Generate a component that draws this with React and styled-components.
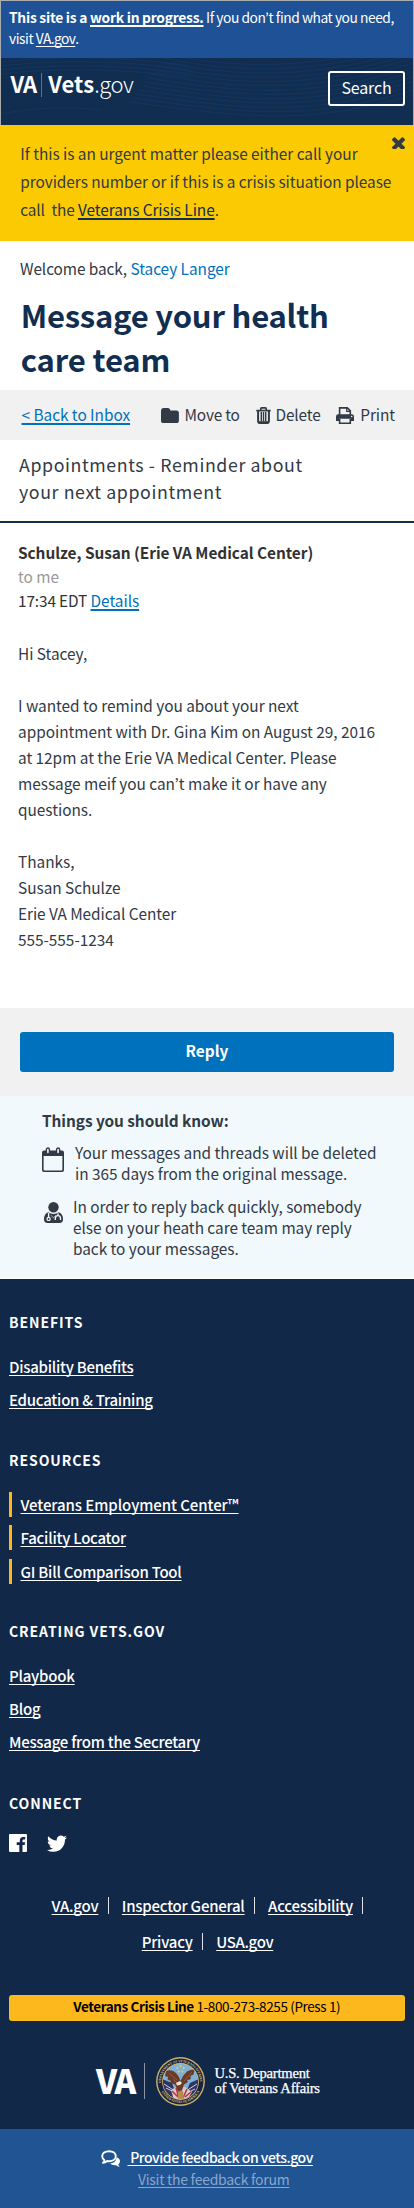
import React from 'react';
import styled, { createGlobalStyle } from 'styled-components';

const GlobalStyle = createGlobalStyle`
  * { box-sizing: border-box; }
  body {
    margin: 0;
    background: #fff;
    color: #323a45;
    font-family: "Noto Sans CJK KR", "Open Sans", sans-serif;
    font-size: 15.4px;
    letter-spacing: -0.03px;
  }
  p, h1, h2, h3, ul { margin: 0; padding: 0; font-weight: 400; list-style: none; }
`;

const Page = styled.div`
  width: 414px;
  height: 2208px;
  overflow: hidden;
  display: flex;
  flex-direction: column;
`;

const Line = styled.span`
  display: block;
  white-space: pre;
  letter-spacing: ${p => p.$ls ?? -0.03}px;
`;

const Run = styled.span`
  white-space: pre;
  letter-spacing: ${p => p.$ls ?? 0}px;
  font-weight: ${p => p.$weight ?? 'inherit'};
`;

const Link = styled.a`
  color: ${p => p.$color ?? '#0071bc'};
  letter-spacing: ${p => p.$ls ?? -0.03}px;
  font-weight: ${p => p.$weight ?? 'inherit'};
  white-space: pre;
  text-decoration: ${p => (p.$plain ? 'none' : 'underline')};
  text-decoration-thickness: ${p => p.$thick ?? 1}px;
  text-underline-offset: ${p => p.$offset ?? 2}px;
  text-decoration-skip-ink: none;
`;

/* ---------- top of the page ---------- */
const Top = styled.div`
  height: 125px;
  border: 1px solid #a9adae;
  border-bottom: 0;
`;

const Banner = styled.div`
  height: 57px;
  padding: 6px 0 0 8px;
  background: #1e5196;
  color: #fff;
  font-size: 13.8px;
  line-height: 21.3px;
`;

const Header = styled.header`
  position: relative;
  height: 67px;
  padding: 13px 8px 0 9.5px;
  display: flex;
  justify-content: space-between;
  align-items: flex-start;
  background: #112e51;
  color: #fff;
`;

const Waves = styled.svg`
  position: absolute;
  inset: 0;
  width: 100%;
  height: 100%;
`;

const Brand = styled.div`
  position: relative;
  display: flex;
  align-items: center;
  height: 24px;
  font-size: 22px;
  line-height: 24px;
`;

const BrandRule = styled.span`
  width: 1px;
  height: 24px;
  margin: 3px 6px 0 5px;
  background: #5b7089;
`;

const SearchButton = styled.button`
  position: relative;
  width: 77px;
  height: 35px;
  padding: 0 0 2px;
  border: 2px solid #fff;
  border-radius: 3px;
  background: transparent;
  color: #fff;
  font: 400 16px/29px "Noto Sans CJK KR", sans-serif;
  letter-spacing: -0.15px;
`;

const Alert = styled.section`
  height: 116px;
  padding: 14.4px 9px 0 20.3px;
  display: flex;
  justify-content: space-between;
  background: #fbca03;
  line-height: 28px;
  white-space: nowrap;
`;

const CloseIcon = styled.svg`
  width: 13px;
  height: 13px;
  margin: -3.4px 0 0 -40px;
  flex: none;
`;

/* ---------- message ---------- */
const Intro = styled.section`
  height: 149px;
  padding: 15px 20px 0;
  line-height: 24px;
`;

const Title = styled.h1`
  margin: 12.8px 0 0 0.7px;
  color: #112e51;
  font-size: 31px;
  font-weight: 700;
  line-height: 43.7px;
`;

const Toolbar = styled.nav`
  height: 50px;
  padding: 0 19px 2px 21.5px;
  display: flex;
  align-items: center;
  justify-content: space-between;
  background: #f1f1f1;
`;

const Actions = styled.div`
  display: flex;
  align-items: center;
  gap: ${p => p.$gap}px;
`;

const Action = styled.span`
  display: flex;
  align-items: center;
  line-height: 24px;

  svg { display: block; margin-right: ${p => p.$gap}px; position: relative; top: 1px; }
`;

const Subject = styled.h2`
  height: 83px;
  padding: 11.4px 19px 0;
  border-bottom: 2px solid #112e51;
  font-size: 17.8px;
  line-height: 27px;
`;

const Message = styled.article`
  height: 485px;
  padding: 16.5px 18px 0;
  line-height: 24px;
`;

const Sender = styled.div`
  color: #323232;
`;

const Muted = styled.p`
  color: #999;
`;

const Body = styled.div`
  margin-top: 28px;
  display: flex;
  flex-direction: column;
  gap: 26px;
  line-height: 26px;
`;

const ReplyBar = styled.div`
  height: 88px;
  padding: 24px 20px;
  background: #f1f1f1;
`;

const ReplyButton = styled.button`
  display: block;
  width: 374px;
  height: 40px;
  padding: 0 0 2.5px;
  border: 0;
  border-radius: 3px;
  background: #0071bc;
  color: #fff;
  font: 700 15.4px/37px "Noto Sans CJK KR", sans-serif;
`;

const Info = styled.aside`
  height: 183px;
  padding: 12.2px 20px 0 42px;
  border-bottom: 1px solid #fff;
  background: #f1f9fd;
  line-height: 24px;
`;

const InfoItem = styled.div`
  display: flex;
  align-items: flex-start;
  margin-top: ${p => p.$top}px;
  line-height: 21px;

  svg { flex: none; margin: ${p => p.$icon}; }
`;

/* ---------- footer ---------- */
const Footer = styled.footer`
  height: 850px;
  padding: 31.2px 9px 0;
  background: #112849;
  color: #fff;
`;

const FooterHeading = styled.h3`
  margin-top: ${p => p.$top ?? 0}px;
  font-size: 14px;
  font-weight: 700;
  line-height: 24px;
  letter-spacing: 0.92px;
`;

const FooterList = styled.ul`
  margin-top: 19.7px;
  display: flex;
  flex-direction: column;
  gap: 8.3px;
  font-size: 15px;
  line-height: 25px;
`;

const FooterItem = styled.li`
  height: 25px;
  ${p => p.$marked && 'border-left: 3.5px solid #fdb81e; padding-left: 9px; margin-left: -0.5px;'}
`;

const Social = styled.div`
  margin-top: 19px;
  display: flex;
  align-items: center;
  gap: 20px;
  height: 19px;

  svg { display: block; }
`;

const LegalLinks = styled.div`
  margin: 34.9px 0 0;
  padding-left: 1px;
  display: flex;
  flex-direction: column;
  font-size: 15px;
  line-height: 36.2px;
`;

const LegalRow = styled.div`
  display: flex;
  justify-content: center;
  align-items: center;
`;

const Divider = styled.i`
  width: 1px;
  height: 17px;
  margin: 0 ${p => p.$after ?? 13}px 0 9.5px;
  background: #dfe3e8;
`;

const CrisisLine = styled.div`
  height: 26px;
  margin: 34.6px 0 0 -0.5px;
  border-radius: 3px;
  background: #fdb81e;
  color: #000;
  font-size: 13.5px;
  line-height: 23px;
  text-align: center;
  white-space: pre;
`;

const Department = styled.div`
  margin-top: 36px;
  height: 49px;
  padding-left: 87px;
  display: flex;
  align-items: center;
`;

const VaMark = styled.span`
  width: 48px;
  margin-top: -2px;
  font-size: 33px;
  font-weight: 900;
  line-height: 48px;
  letter-spacing: -2px;
`;

const MarkRule = styled.i`
  width: 1px;
  height: 36px;
  margin-right: 11px;
  background: #8995a6;
`;

const DepartmentName = styled.div`
  margin: -1px 0 0 9.5px;
  font-family: "Liberation Serif", serif;
  font-size: 14.6px;
  line-height: 14.2px;
  -webkit-text-stroke: 0.25px #fff;
`;

const Feedback = styled.section`
  height: 79px;
  padding-top: 16.5px;
  background: #205493;
  color: #fff;
  font-size: 14px;
  line-height: 22px;
`;

const FeedbackRow = styled.div`
  display: flex;
  padding-left: ${p => p.$left}px;

  svg { flex: none; margin: 4.5px 8px 0 0; }
`;

/* ---------- drawings ---------- */
const HeaderWaves = () => (
  <Waves viewBox="0 0 412 67" preserveAspectRatio="none" fill="none" stroke="#15447a" strokeOpacity="0.42" strokeWidth="0.8">
    {Array.from({ length: 13 }, (_, i) => (
      <path key={i} d={`M${165 - i * 3} ${i * 4 - 4} C ${230 + i * 3} ${10 + i * 4.4}, ${310} ${14 + i * 4.2}, 412 ${-18 + i * 4.6}`} />
    ))}
    {Array.from({ length: 4 }, (_, i) => (
      <path key={`l${i}`} d={`M0 ${4 + i * 4} C 60 ${i * 4 - 3}, 130 ${i * 4 - 1}, 190 ${8 + i * 4}`} />
    ))}
    <path d="M0 56C30 50 60 48 100 52" />
  </Waves>
);

const FolderIcon = () => (
  <svg width="18" height="15" viewBox="0 0 18 15" fill="#323a45">
    <path d="M2.8 0h3.9a2.5 2.5 0 0 1 2.5 2.5h6.1a2.6 2.6 0 0 1 2.6 2.6v7.3a2.6 2.6 0 0 1-2.6 2.6H2.6A2.6 2.6 0 0 1 0 12.400V2.700A2.700 2.700 0 0 1 2.800 0z" />
  </svg>
);

const TrashIcon = () => (
  <svg width="15" height="17" viewBox="0 0 15 17" fill="none" stroke="#323a45">
    <path d="M4.700 3V1.900q0-1 1-1h3.600q1 0 1 1V3" strokeWidth="1.600" />
    <path d="M0.300 3.600h14.400" strokeWidth="1.700" />
    <path d="M2.100 4v10.300q0 1.800 1.800 1.800h7.200q1.800 0 1.800-1.800V4" strokeWidth="2" />
    <path d="M5.300 5v9.500M7.500 5v9.500M9.700 5v9.500" strokeWidth="1.400" />
    <path d="M3 14.900h9" strokeWidth="1.400" />
  </svg>
);

const PrintIcon = () => (
  <svg width="18" height="17" viewBox="0 0 18 17">
    <path d="M3.600 8V.9h7.700l3 3V8" fill="none" stroke="#323a45" strokeWidth="1.600" />
    <path d="M10.700.8v3.600h3.700" fill="none" stroke="#323a45" strokeWidth="1.200" />
    <path d="M2.300 7.200h13.400A2.300 2.300 0 0 1 18 9.500V14h-3v-2.200H3V14H0V9.500a2.300 2.300 0 0 1 2.300-2.300z" fill="#323a45" />
    <path d="M3.600 11.700v4.500h10.700v-4.500" fill="none" stroke="#323a45" strokeWidth="1.600" />
    <circle cx="15.700" cy="9.500" r=".8" fill="#f1f1f1" />
  </svg>
);

const CalendarIcon = () => (
  <svg width="22" height="25" viewBox="0 0 22 25">
    <path d="M2 3.500h18a2 2 0 0 1 2 2V23a2 2 0 0 1-2 2H2a2 2 0 0 1-2-2V5.500a2 2 0 0 1 2-2zM1.600 9v13.600q0 .8.800.8h17.200q.8 0 .8-.8V9z" fill="#323a45" fillRule="evenodd" />
    <rect x="4.400" y="1" width="3" height="6" rx="1.500" fill="#f1f9fd" stroke="#323a45" strokeWidth="1.400" />
    <rect x="14.600" y="1" width="3" height="6" rx="1.500" fill="#f1f9fd" stroke="#323a45" strokeWidth="1.400" />
  </svg>
);

const DoctorIcon = () => (
  <svg width="19" height="21" viewBox="0 0 19 21">
    <circle cx="9.500" cy="5.300" r="5.200" fill="#323a45" />
    <path d="M4.200 10.300Q0 11.500 0 17.600 0 21 3.500 21h12q3.500 0 3.500-3.400 0-6.100-4.200-7.300Q12.500 12 9.500 12t-5.300-1.700z" fill="#323a45" />
    <path d="M4.600 11v4.500M14 11.200v2.300M11.300 18v-1.600q0-2.700 2.600-2.700t2.600 2.700V18" fill="none" stroke="#f1f9fd" strokeWidth="1.300" />
    <circle cx="4.600" cy="16.900" r="1.600" fill="#323a45" stroke="#f1f9fd" strokeWidth="1.200" />
    <path d="M6.800 13.200l2.700 2.600 2.300-2.500" fill="none" stroke="#f1f9fd" strokeWidth=".6" />
  </svg>
);

const FacebookIcon = () => (
  <svg width="18" height="18" viewBox="0 0 18 18" fill="#fff">
    <path d="M1 0h16a1 1 0 0 1 1 1v16a1 1 0 0 1-1 1h-3.500v-7h2.200l.4-2.700h-2.600V6.600q0-1.200 1.300-1.200h1.400V3q-.7-.1-2-.1-3.400 0-3.400 3.500v1.900H7.700V11h2.600v7H1a1 1 0 0 1-1-1V1a1 1 0 0 1 1-1z" />
  </svg>
);

const TwitterIcon = () => (
  <svg width="20" height="17" viewBox="0 1.800 24 20" fill="#fff">
    <path d="M23.950 4.570a10 10 0 0 1-2.820.77 4.960 4.960 0 0 0 2.160-2.720c-.95.550-2 .95-3.130 1.180a4.920 4.920 0 0 0-8.380 4.480C7.690 8.100 4.070 6.130 1.640 3.160a4.820 4.820 0 0 0-.67 2.480c0 1.710.87 3.210 2.190 4.100a4.900 4.900 0 0 1-2.230-.62v.06a4.920 4.920 0 0 0 3.950 4.830 5 5 0 0 1-2.210.08 4.940 4.940 0 0 0 4.600 3.420A9.870 9.870 0 0 1 0 19.540a14 14 0 0 0 7.550 2.210c9.050 0 14-7.500 14-13.980 0-.21 0-.42-.02-.63a9.940 9.940 0 0 0 2.460-2.550z" />
  </svg>
);

const CommentsIcon = () => (
  <svg width="19" height="17" viewBox="0 0 19 17">
    <path d="M8 1.200c4 0 6.800 2 6.800 5s-2.800 5-6.800 5q-1 0-1.900-.2Q4.200 12.600 2 12.800q1.200-1.100 1.400-2.800Q1.200 8.700 1.200 6.200c0-3 2.800-5 6.800-5z" fill="none" stroke="#fff" strokeWidth="1.900" strokeLinejoin="round" />
    <path d="M15.700 7.200Q19 8.500 19 11.200q0 1.900-1.700 3.200.3 1.200 1.500 2.300-2 0-3.600-1.500-3.900.5-6.200-1.700 6-.6 6.700-6.300z" fill="#fff" />
  </svg>
);

const Seal = () => (
  <svg width="49" height="49" viewBox="0 0 49 49">
    <defs>
      <path id="seal-top" d="M5.300 27.500A19.400 19.400 0 1 1 43.700 27.500" />
      <path id="seal-bottom" d="M3.800 30A21.400 21.400 0 0 0 45.200 30" />
      <clipPath id="seal-field"><circle cx="24.500" cy="24.500" r="17.600" /></clipPath>
    </defs>
    <circle cx="24.500" cy="24.500" r="24.400" fill="#c9b268" />
    <circle cx="24.500" cy="24.500" r="23" fill="#1c2340" />
    <circle cx="24.500" cy="24.500" r="18.400" fill="#d3bd74" />
    <circle cx="24.500" cy="24.500" r="17.600" fill="#7fb0d6" />
    <g fill="#dccb84" fontFamily="Liberation Serif, serif" fontWeight="700" fontSize="3.500" letterSpacing="0">
      <text><textPath href="#seal-top" startOffset="2" textLength="61" lengthAdjust="spacingAndGlyphs">DEPARTMENT OF VETERANS AFFAIRS</textPath></text>
      <text><textPath href="#seal-bottom" startOffset="5" textLength="46" lengthAdjust="spacingAndGlyphs">UNITED STATES OF AMERICA</textPath></text>
    </g>
    <g clipPath="url(#seal-field)">
      <path d="M6 22l10 4 5 14-7 3L6 33zM43 22l-9 4-6 14 7 3 8-10z" fill="#2c3563" />
      <path d="M8 27l11 7M10 31l10 5M41 27l-11 7M39 32l-10 5" stroke="#e6e2e4" strokeWidth=".9" />
      <path d="M15 33l7-4 7 1 7 5-5 8H18z" fill="#d9c9cc" />
      <path d="M16 34l6 6M20 31l3 10M31 32l-4 9M35 35l-6 5" stroke="#b3343e" strokeWidth="1.500" />
      <path d="M22 34h5l1 8h-6z" fill="#b98b4b" />
      <path d="M10 14q6-2 10 2 3 3 4.500 8Q27 18 31 14.500q4-2.500 8-2-1 2-1.500 5l-3 1.500q1 2-.5 3.500l-3 .5 1 2-4 2.500-2 6-4 1-3-7-5-1.500 1-2-3.500-1.500.5-2.500-3-1z" fill="#6b3b27" />
      <path d="M13 16l8 7M36 15l-8 9M17 22l5 5" stroke="#a06a45" strokeWidth=".7" />
      <path d="M20 26l4-2 2 2-2 2-3 .5z" fill="#eee4cf" />
    </g>
    <g fill="#e8cf62">
      <circle cx="24.500" cy="8.900" r="1" /><circle cx="21.300" cy="11" r="1" /><circle cx="27.700" cy="11" r="1" />
      <circle cx="22.600" cy="14.400" r="1" /><circle cx="26.400" cy="14.400" r="1" />
    </g>
  </svg>
);

const FooterLinks = ({ items, marked }) => (
  <FooterList>
    {items.map(([text, ls]) => (
      <FooterItem key={text} $marked={marked}>
        <Link $color="#fff" $weight={500} $ls={ls}>{text}</Link>
      </FooterItem>
    ))}
  </FooterList>
);

export default function App() {
  return (
    <Page>
      <GlobalStyle />
      <Top>
        <Banner>
          <Line>
            <Run $weight={700} $ls={-0.25}>This site is a </Run>
            <Link $color="#fff" $weight={700} $ls={-0.25} $thick={1.5}>work in progress.</Link>
            <Run $ls={-0.46}> If you don’t find what you need,</Run>
          </Line>
          <Line>
            <Run $ls={-0.45}>visit </Run>
            <Link $color="#fff" $ls={-0.6}>VA.gov</Link>.
          </Line>
        </Banner>
        <Header>
          <HeaderWaves />
          <Brand>
            <Run $weight={700} $ls={-0.8}>VA</Run>
            <BrandRule />
            <Run $weight={700} $ls={0.1}>Vets</Run>
            <Run $weight={300} $ls={-0.45}>.gov</Run>
          </Brand>
          <SearchButton>Search</SearchButton>
        </Header>
      </Top>

      <Alert>
        <p>
          <Line>If this is an urgent matter please either call your</Line>
          <Line $ls={-0.06}>providers number or if this is a crisis situation please</Line>
          <Line $ls={-0.15}>call  the <Link $color="#112e51" $thick={2} $ls={-0.06}>Veterans Crisis Line</Link>.</Line>
        </p>
        <CloseIcon viewBox="302 218 1188 1188">
          <path transform="translate(0 1600) scale(1 -1)" fill="#323a45" d="M1490 322q0-40-28-68l-136-136q-28-28-68-28t-68 28l-294 294l-294-294q-28-28-68-28t-68 28l-136 136q-28 28-28 68t28 68l294 294l-294 294q-28 28-28 68t28 68l136 136q28 28 68 28t68-28l294-294l294 294q28 28 68 28t68-28l136-136q28-28 28-68t-28-68l-294-294l294-294q28-28 28-68z" />
        </CloseIcon>
      </Alert>

      <Intro>
        <p><Run $ls={-0.09}>Welcome back, </Run><Link $plain>Stacey Langer</Link></p>
        <Title>
          <Line $ls={-0.22}>Message your health</Line>
          <Line $ls={-0.12}>care team</Line>
        </Title>
      </Intro>

      <Toolbar>
        <Link $thick={2}>&lt; Back to Inbox</Link>
        <Actions $gap={15.8}>
          <Action $gap={5.5}><FolderIcon /><Run $ls={-0.2}>Move to</Run></Action>
          <Action $gap={5}><TrashIcon /><Run $ls={-0.15}>Delete</Run></Action>
          <Action $gap={6}><PrintIcon /><Run $ls={-0.1}>Print</Run></Action>
        </Actions>
      </Toolbar>

      <Subject>
        <Line $ls={0.6}>Appointments - Reminder about</Line>
        <Line $ls={0.6}>your next appointment</Line>
      </Subject>

      <Message>
        <Sender>
          <Line as="strong" $ls={-0.05}>Schulze, Susan (Erie VA Medical Center)</Line>
          <Muted>to me</Muted>
          <p><Run $ls={-0.13}>17:34 EDT </Run><Link $thick={2}>Details</Link></p>
        </Sender>
        <Body>
          <p>Hi Stacey,</p>
          <p>
            <Line>I wanted to remind you about your next</Line>
            <Line>appointment with Dr. Gina Kim on August 29, 2016</Line>
            <Line>at 12pm at the Erie VA Medical Center. Please</Line>
            <Line>message meif you can’t make it or have any</Line>
            <Line>questions.</Line>
          </p>
          <p>
            <Line>Thanks,</Line>
            <Line>Susan Schulze</Line>
            <Line $ls={-0.06}>Erie VA Medical Center</Line>
            <Line>555-555-1234</Line>
          </p>
        </Body>
      </Message>

      <ReplyBar><ReplyButton>Reply</ReplyButton></ReplyBar>

      <Info>
        <Line as="strong" $ls={-0.06}>Things you should know:</Line>
        <InfoItem $top={9.5} $icon="5.3px 11px 0 0">
          <CalendarIcon />
          <p>
            <Line>Your messages and threads will be deleted</Line>
            <Line>in 365 days from the original message.</Line>
          </p>
        </InfoItem>
        <InfoItem $top={12.3} $icon="6px 10px 0 2px">
          <DoctorIcon />
          <p>
            <Line $ls={-0.05}>In order to reply back quickly, somebody</Line>
            <Line>else on your heath care team may reply</Line>
            <Line>back to your messages.</Line>
          </p>
        </InfoItem>
      </Info>

      <Footer>
        <FooterHeading>BENEFITS</FooterHeading>
        <FooterLinks items={[['Disability Benefits', -0.26], ['Education & Training', -0.24]]} />
        <FooterHeading $top={36.1}>RESOURCES</FooterHeading>
        <FooterLinks marked items={[['Veterans Employment Center™', -0.07], ['Facility Locator', -0.24], ['GI Bill Comparison Tool', -0.24]]} />
        <FooterHeading $top={35.5}>CREATING VETS.GOV</FooterHeading>
        <FooterLinks items={[['Playbook', -0.24], ['Blog', -0.24], ['Message from the Secretary', -0.26]]} />
        <FooterHeading $top={36.4}>CONNECT</FooterHeading>
        <Social><FacebookIcon /><TwitterIcon /></Social>
        <LegalLinks>
          <LegalRow>
            <Link $color="#fff" $weight={500} $ls={-0.24}>VA.gov</Link><Divider />
            <Link $color="#fff" $weight={500} $ls={-0.24}>Inspector General</Link><Divider />
            <Link $color="#fff" $weight={500} $ls={-0.24}>Accessibility</Link><Divider $after={0} />
          </LegalRow>
          <LegalRow>
            <Link $color="#fff" $weight={500} $ls={-0.24}>Privacy</Link><Divider />
            <Link $color="#fff" $weight={500} $ls={-0.35}>USA.gov</Link>
          </LegalRow>
        </LegalLinks>
        <CrisisLine>
          <Run $weight={700} $ls={-0.41}>Veterans Crisis Line </Run>
          <Run $ls={-0.38}>1-800-273-8255 (Press 1)</Run>
        </CrisisLine>
        <Department>
          <VaMark>VA</VaMark>
          <MarkRule />
          <Seal />
          <DepartmentName>
            <Line $ls={-0.23}>U.S. Department</Line>
            <Line $ls={-0.23}>of Veterans Affairs</Line>
          </DepartmentName>
        </Department>
      </Footer>

      <Feedback>
        <FeedbackRow $left={100.5}>
          <CommentsIcon />
          <Link $color="#fff" $weight={500} $ls={-0.45}> Provide feedback on vets.gov</Link>
        </FeedbackRow>
        <FeedbackRow $left={138}>
          <Link $color="#8aa6cb" $ls={-0.28}>Visit the feedback forum</Link>
        </FeedbackRow>
      </Feedback>
    </Page>
  );
}
